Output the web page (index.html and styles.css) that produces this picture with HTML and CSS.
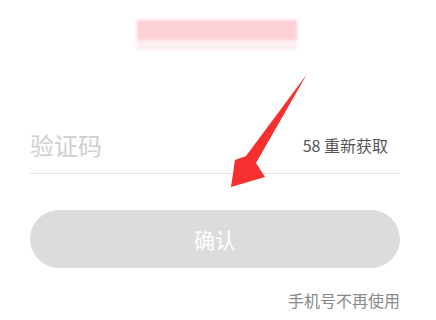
FILE: index.html
```html
<!DOCTYPE html>
<html lang="zh">
<head>
<meta charset="utf-8">
<link rel="stylesheet" href="styles.css">
</head>
<body>
<div class="page">
  <div class="header"><div class="blur-title"></div></div>
  <div class="field">
    <span class="placeholder">验证码</span>
    <span class="resend">58 重新获取</span>
  </div>
  <div class="btn">确认</div>
  <div class="footer">手机号不再使用</div>
  <svg class="arrow" width="436" height="320" viewBox="0 0 436 320">
    <polygon points="307,74 256,163 265,177 231,187 235,160 246,156" fill="#f5302e"/>
  </svg>
</div>
</body>
</html>
```
FILE: styles.css
```css
html, body { margin: 0; padding: 0; background: #fff; }
body { font-family: "Noto Sans CJK SC", "Noto Sans", sans-serif; }
.page { position: relative; width: 436px; height: 320px; padding: 0 36px 0 30px; box-sizing: border-box; overflow: hidden; }
.header { height: 121px; display: flex; justify-content: center; padding-top: 20px; box-sizing: border-box; }
.blur-title { width: 160px; height: 30px; margin-left: 4px; background: linear-gradient(to bottom, #fdd0d8 0, #fdd0d8 20px, #fdeef1 20px, #fdeef1 30px); filter: blur(1.5px); }
.field { height: 53px; padding-bottom: 5px; box-sizing: border-box; border-bottom: 1px solid #e6e6e6; display: flex; align-items: center; justify-content: space-between; }
.placeholder { font-size: 24px; color: #cfcfcf; line-height: 30px; }
.resend { font-size: 16px; color: #555; line-height: 22px; margin-right: 12px; }
.btn { margin-top: 36px; height: 58px; border-radius: 29px; background: #dcdcdc; color: #fff; font-size: 21px; display: flex; align-items: center; justify-content: center; }
.footer { margin-top: 21px; text-align: right; font-size: 16px; line-height: 22px; color: #888; }
.arrow { position: absolute; left: 0; top: 0; }
```
